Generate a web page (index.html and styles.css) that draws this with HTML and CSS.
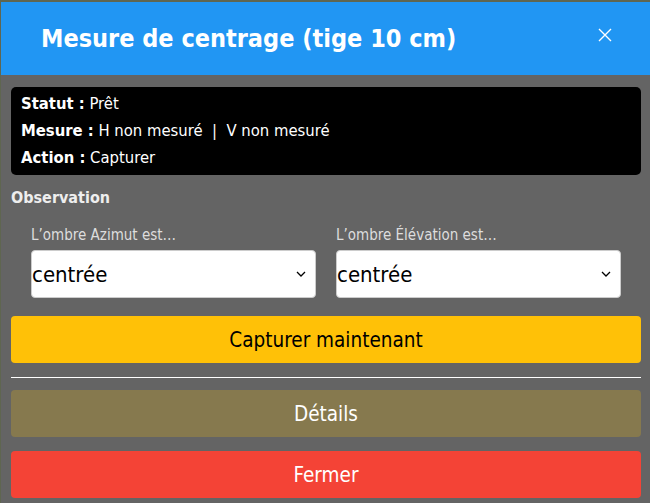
FILE: index.html
```html
<!DOCTYPE html>
<html lang="fr">
<head>
<meta charset="UTF-8">
<meta name="viewport" content="width=device-width, initial-scale=1.0">
<title>Mesure de centrage</title>
<link rel="stylesheet" href="styles.css">
</head>
<body>
<div class="modal">
<header class="modal-entete">
<h3>Mesure de centrage (tige 10 cm)</h3>
<button class="fermer-x" aria-label="Fermer">
<svg width="14" height="14" viewBox="0 0 14 14"><path d="M1 1 L13 13 M13 1 L1 13" stroke="#fff" stroke-width="1.4" fill="none"/></svg>
</button>
</header>
<div class="modal-corps">
<div class="etat">
<div><b>Statut :</b> Prêt</div>
<div><b>Mesure :</b> H non mesuré &nbsp;|&nbsp; V non mesuré</div>
<div><b>Action :</b> Capturer</div>
</div>
<div class="titre-section">Observation</div>
<div class="colonnes">
<div class="colonne">
<label for="ombre-az">L’ombre Azimut est…</label>
<div class="liste">
<select id="ombre-az">
<option>centrée</option>
<option>à gauche</option>
<option>à droite</option>
</select>
<svg class="chevron" width="10" height="6" viewBox="0 0 10 6"><path d="M1 1 L5 5 L9 1" stroke="#000" stroke-width="1.3" fill="none"/></svg>
</div>
</div>
<div class="colonne">
<label for="ombre-el">L’ombre Élévation est…</label>
<div class="liste">
<select id="ombre-el">
<option>centrée</option>
<option>en haut</option>
<option>en bas</option>
</select>
<svg class="chevron" width="10" height="6" viewBox="0 0 10 6"><path d="M1 1 L5 5 L9 1" stroke="#000" stroke-width="1.3" fill="none"/></svg>
</div>
</div>
</div>
<button class="bouton bouton-capture">Capturer maintenant</button>
<hr class="separateur">
<button class="bouton bouton-details">Détails</button>
<button class="bouton bouton-fermer">Fermer</button>
</div>
</div>
</body>
</html>
```

FILE: styles.css
```css
body {
    margin: 0;
    background: #5f6650;
    font-family: "DejaVu Sans Condensed", "DejaVu Sans", sans-serif;
}

.modal {
    margin: 2px 0 0 1px;
    height: 501px;
    background: #646464;
}

.modal-entete {
    height: 73px;
    background: #2196f3;
    display: flex;
    align-items: center;
    justify-content: space-between;
    padding: 0 38px 0 40px;
    box-sizing: border-box;
}

.modal-entete h3 {
    margin: 0;
    color: #fff;
    font-size: 25px;
    font-weight: bold;
}

.fermer-x {
    background: none;
    border: none;
    padding: 0;
    display: flex;
    margin-top: -8px;
    cursor: pointer;
}

.modal-corps {
    padding: 12px 9px 0 10px;
}

.etat {
    background: #000;
    color: #fff;
    border-radius: 5px;
    padding: 3px 10px 4px;
    font-size: 16.5px;
    line-height: 27px;
}

.titre-section {
    margin-top: 13px;
    color: #eee;
    font-weight: bold;
    font-size: 16px;
    line-height: 20px;
}

.colonnes {
    display: grid;
    grid-template-columns: 1fr 1fr;
    gap: 20px;
    padding: 17px 20px 0;
}

.colonne label {
    display: block;
    color: #ddd;
    font-size: 15px;
    line-height: 20px;
    margin-bottom: 5px;
}

.liste {
    position: relative;
}

.liste select {
    display: block;
    width: 100%;
    height: 48px;
    appearance: none;
    background: #fff;
    border: 1px solid #ccc;
    border-radius: 4px;
    font-family: inherit;
    font-size: 22px;
    padding: 0;
    color: #000;
}

.chevron {
    position: absolute;
    right: 10px;
    top: 21px;
    pointer-events: none;
}

.bouton {
    display: block;
    width: 100%;
    height: 47px;
    border: none;
    border-radius: 4px;
    font-family: inherit;
    font-size: 20.5px;
    cursor: pointer;
}

.bouton-capture {
    margin-top: 18px;
    background: #ffc107;
    color: #000;
}

.separateur {
    border: none;
    border-top: 1px solid #fff;
    margin: 14px 0 12px;
}

.bouton-details {
    background: #86794e;
    color: #fff;
}

.bouton-fermer {
    margin-top: 14px;
    background: #f44336;
    color: #fff;
}
```
